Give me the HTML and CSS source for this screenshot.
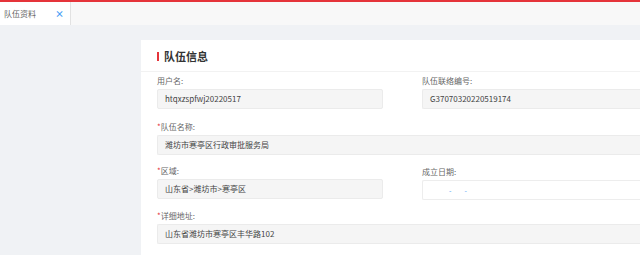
FILE: index.html
```html
<!DOCTYPE html>
<html lang="zh-CN">
<head>
  <meta charset="UTF-8">
  <title>队伍资料</title>
  <link rel="stylesheet" href="styles.css">
</head>
<body>

  <div class="topline"></div>

  <!-- Tabs -->
  <div class="tabs">
    <div class="tab active">
      <span>队伍资料</span>
      <span class="tab-close">×</span>
    </div>
  </div>

  <div class="main">
    <div class="card">
      <div class="card-head">
        <h3 class="card-title">队伍信息</h3>
      </div>

      <div class="form">
        <div class="field first">
          <label>用户名:</label>
          <div class="input">htqxzspfwj20220517</div>
        </div>
        <div class="field first">
          <label>队伍联络编号:</label>
          <div class="input">G37070320220519174</div>
        </div>

        <div class="field wide">
          <label><i class="req">*</i>队伍名称:</label>
          <div class="input">潍坊市寒亭区行政审批服务局</div>
        </div>

        <div class="field">
          <label><i class="req">*</i>区域:</label>
          <div class="input">山东省&gt;潍坊市&gt;寒亭区</div>
        </div>
        <div class="field date-field">
          <label>成立日期:</label>
          <div class="input date">
            <span class="dash">-</span>
            <span class="dash">-</span>
          </div>
        </div>

        <div class="field wide">
          <label><i class="req">*</i>详细地址:</label>
          <div class="input">山东省潍坊市寒亭区丰华路102</div>
        </div>
      </div>
    </div>
  </div>

</body>
</html>
```

FILE: styles.css
```css
* {
  margin: 0;
  padding: 0;
  box-sizing: border-box;
}

body {
  font-family: "Noto Sans CJK SC", "Noto Sans", sans-serif;
  width: 640px;
  height: 255px;
  overflow: hidden;
  background: #f0f2f5;
}

.topline {
  height: 2px;
  background: #e5343a;
}

.tabs {
  height: 23px;
  background: #f8f8f8;
  display: flex;
}

.tab {
  width: 71px;
  height: 100%;
  display: flex;
  align-items: center;
  justify-content: space-between;
  padding: 0 6px 0 4px;
  font-size: 8px;
  color: #666;
  border-right: 1px solid #e2e2e2;
}

.tab.active {
  background: #fff;
}

.tab-close {
  color: #4a9ff5;
  font-size: 9px;
  font-weight: bold;
  line-height: 1;
}

.main {
  height: 230px;
  padding: 15px 0 0 141px;
}

.card {
  background: #fff;
  width: 499px;
  height: 215px;
  overflow: hidden;
}

.card-head {
  height: 32px;
  padding: 0 16px;
  display: flex;
  align-items: center;
  border-bottom: 1px solid #f2f2f2;
}

.card-title {
  font-size: 11px;
  font-weight: bold;
  color: #333;
  padding-left: 5px;
  border-left: 2px solid #e5343a;
  line-height: 9px;
  margin-top: 1px;
}

.form {
  display: grid;
  grid-template-columns: 226px 220px;
  column-gap: 39px;
  padding: 3px 0 0 16px;
}

.field {
  margin-bottom: 10px;
}

.field.first {
  margin-bottom: 12px;
}

.field.wide {
  grid-column: 1 / 3;
}

.field label {
  display: block;
  font-size: 8px;
  line-height: 12px;
  height: 12px;
  color: #666;
  margin-bottom: 2px;
}

.req {
  font-style: normal;
  color: #e5343a;
}

.input {
  height: 20px;
  background: #f5f5f5;
  border: 1px solid #ebebeb;
  border-right: 0;
  border-radius: 2px 0 0 2px;
  padding: 0 7px;
  font-size: 8px;
  line-height: 18px;
  color: #444;
}

.field:first-child .input,
.field:nth-child(4) .input {
  border-right: 1px solid #ebebeb;
  border-radius: 2px;
}

.date-field {
  padding-top: 1px;
}

.input.date {
  background: #fff;
  border-color: #ededed;
  display: flex;
  gap: 13px;
  padding-left: 26px;
}

.dash {
  color: #4a9ff5;
  font-size: 7px;
}
```
